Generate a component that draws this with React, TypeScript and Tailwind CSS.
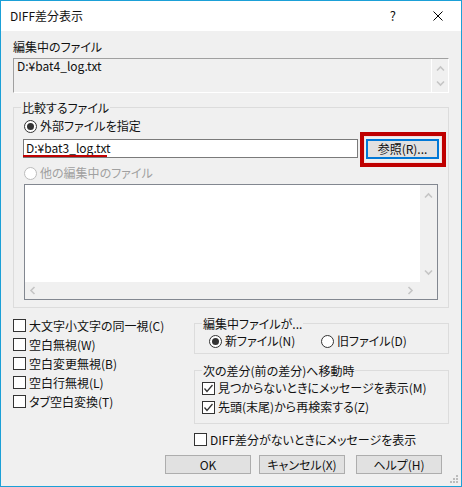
import React from 'react';

type Dir = 'up' | 'down' | 'left' | 'right';

const Chevron = ({ dir }: { dir: Dir }) => {
  const vertical = dir === 'up' || dir === 'down';
  const pts = {
    up: '1,5.5 4.5,2 8,5.5',
    down: '1,1.5 4.5,5 8,1.5',
    left: '5.5,1 2,4.5 5.5,8',
    right: '1.5,1 5,4.5 1.5,8',
  }[dir];
  return (
    <svg width={vertical ? 9 : 7} height={vertical ? 7 : 9} viewBox={vertical ? '0 0 9 7' : '0 0 7 9'}>
      <polyline points={pts} fill="none" stroke="#c5c5c5" strokeWidth="1.6" />
    </svg>
  );
};

const Check = ({ checked = false }: { checked?: boolean }) => (
  <span className="w-[13px] h-[13px] border border-[#333333] bg-white shrink-0 flex items-center justify-center">
    {checked && (
      <svg width="11" height="11" viewBox="0 0 11 11">
        <polyline points="1.5,5.5 4,8.5 9.5,2" fill="none" stroke="#333333" strokeWidth="1.3" />
      </svg>
    )}
  </span>
);

const Radio = ({ checked = false, disabled = false }: { checked?: boolean; disabled?: boolean }) => (
  <span
    className={`w-[13px] h-[13px] rounded-full border bg-white shrink-0 flex items-center justify-center ${
      disabled ? 'border-[#bcbcbc]' : 'border-[#333333]'
    }`}
  >
    {checked && <span className="w-[7px] h-[7px] rounded-full bg-[#333333]" />}
  </span>
);

const GroupLabel = ({ children }: { children: React.ReactNode }) => (
  <span className="absolute left-[7px] -top-[8px] px-[1px] bg-[#f0f0f0] leading-[16px]">{children}</span>
);

const Btn = ({ label, className = '' }: { label: string; className?: string }) => (
  <div className={`w-[86px] h-[19px] border border-[#adadad] bg-[#e1e1e1] flex items-center justify-center leading-[16px] ${className}`}>
    {label}
  </div>
);

export default function App() {
  const leftChecks = ['大文字小文字の同一視(C)', '空白無視(W)', '空白変更無視(B)', '空白行無視(L)', 'タブ空白変換(T)'];

  return (
    <div className="relative w-[462px] h-[487px] border border-[#1ba0d7] bg-[#f0f0f0] flex flex-col overflow-hidden text-[12px] leading-[16px] text-[#111111] font-['Noto_Sans_CJK_JP','Noto_Sans_CJK_SC',sans-serif] [font-feature-settings:'palt']">
      {/* title bar */}
      <div className="h-[30px] shrink-0 bg-white flex items-center">
        <span className="ml-[9px]">DIFF差分表示</span>
        <span className="ml-auto text-[13px]">?</span>
        <svg width="10" height="10" viewBox="0 0 10 10" className="ml-[37px] mr-[18px]">
          <path d="M0.5 0.5 L9.5 9.5 M9.5 0.5 L0.5 9.5" stroke="#000" strokeWidth="1" />
        </svg>
      </div>

      <div className="flex-1 flex flex-col px-[12px]">
        {/* current file */}
        <div className="mt-[8px]">編集中のファイル</div>
        <div className="mt-[3px] h-[35px] flex border border-t-[#a0a0a0] border-l-[#a0a0a0] border-b-white border-r-white">
          <div className="flex-1 pl-[3px] leading-[14px]">D:¥bat4_log.txt</div>
          <div className="w-[17px] border-l border-white flex flex-col items-center pt-[6px] gap-[8px]">
            <Chevron dir="up" />
            <Chevron dir="down" />
          </div>
        </div>

        {/* compare file group */}
        <div className="mt-[14px] relative border border-[#dcdcdc] pl-[9px] pb-[7px] flex flex-col">
          <GroupLabel>比較するファイル</GroupLabel>
          <div className="mt-[10px] h-[16px] ml-[1px] flex items-center gap-[3px]">
            <Radio checked />
            <span>外部ファイルを指定</span>
          </div>
          <div className="mt-[5px] flex items-start">
            <div className="relative w-[335px] h-[19px] border border-[#7a7a7a] bg-white pl-[2px] leading-[15px]">
              D:¥bat3_log.txt
              <span className="absolute -left-[1px] top-[15px] w-[84px] h-[2px] bg-[#c00000]" />
            </div>
            <div className="relative ml-[8px] w-[73px] h-[20px] border-2 border-[#0078d7] bg-[#e1e1e1] flex items-center justify-center leading-[16px]">
              参照(R)...
              <span className="absolute -left-[8px] -top-[9px] -right-[9px] -bottom-[10px] border-[4px] border-[#bf0000] shadow-[inset_0_0_0_1px_#f4dede]" />
            </div>
          </div>
          <div className="mt-[6px] h-[16px] ml-[1px] flex items-center gap-[3px] text-[#a0a0a0]">
            <Radio disabled />
            <span>他の編集中のファイル</span>
          </div>
          <div className="mt-[3px] ml-[1px] w-[414px] h-[116px] border border-[#828790] bg-white flex flex-col">
            <div className="flex-1 flex">
              <div className="flex-1" />
              <div className="w-[17px] bg-[#f0f0f0] flex flex-col items-center justify-between pt-[7px] pb-[6px]">
                <Chevron dir="up" />
                <Chevron dir="down" />
              </div>
            </div>
            <div className="h-[17px] flex bg-[#f0f0f0]">
              <div className="flex-1 flex items-center justify-between pl-[4px] pr-[6px]">
                <Chevron dir="left" />
                <Chevron dir="right" />
              </div>
              <div className="w-[17px]" />
            </div>
          </div>
        </div>

        {/* options */}
        <div className="flex">
          <div className="w-[181px] mt-[8px] flex flex-col">
            {leftChecks.map((t) => (
              <div key={t} className="h-[19px] flex items-center gap-[3px]">
                <Check />
                <span>{t}</span>
              </div>
            ))}
          </div>
          <div className="w-[255px] flex flex-col">
            <div className="mt-[15px] relative h-[31px] border border-[#dcdcdc]">
              <GroupLabel>編集中ファイルが...</GroupLabel>
              <div className="mt-[9px] ml-[14px] h-[16px] flex items-center">
                <div className="w-[112px] flex items-center gap-[3px]">
                  <Radio checked />
                  <span>新ファイル(N)</span>
                </div>
                <div className="flex items-center gap-[3px]">
                  <Radio />
                  <span>旧ファイル(D)</span>
                </div>
              </div>
            </div>
            <div className="mt-[16px] relative border border-[#dcdcdc] pl-[7px] pb-[8px] flex flex-col">
              <GroupLabel>次の差分(前の差分)へ移動時</GroupLabel>
              <div className="mt-[9px] h-[16px] flex items-center gap-[3px]">
                <Check checked />
                <span>見つからないときにメッセージを表示(M)</span>
              </div>
              <div className="mt-[3px] h-[16px] flex items-center gap-[3px]">
                <Check checked />
                <span>先頭(末尾)から再検索する(Z)</span>
              </div>
            </div>
            <div className="mt-[6px] h-[19px] flex items-center gap-[3px]">
              <Check />
              <span>DIFF差分がないときにメッセージを表示</span>
            </div>
          </div>
        </div>

        {/* buttons */}
        <div className="mt-[6px] flex justify-end pr-[7px]">
          <Btn label="OK" />
          <Btn label="キャンセル(X)" className="ml-[8px]" />
          <Btn label="ヘルプ(H)" className="ml-[11px]" />
        </div>
      </div>

      {/* size grip */}
      <svg width="9" height="9" viewBox="0 0 9 9" className="absolute right-[2px] bottom-[2px]">
        <g fill="#bcbcbc">
          <rect x="6" y="0" width="2" height="2" />
          <rect x="3" y="3" width="2" height="2" />
          <rect x="6" y="3" width="2" height="2" />
          <rect x="0" y="6" width="2" height="2" />
          <rect x="3" y="6" width="2" height="2" />
          <rect x="6" y="6" width="2" height="2" />
        </g>
      </svg>
    </div>
  );
}
